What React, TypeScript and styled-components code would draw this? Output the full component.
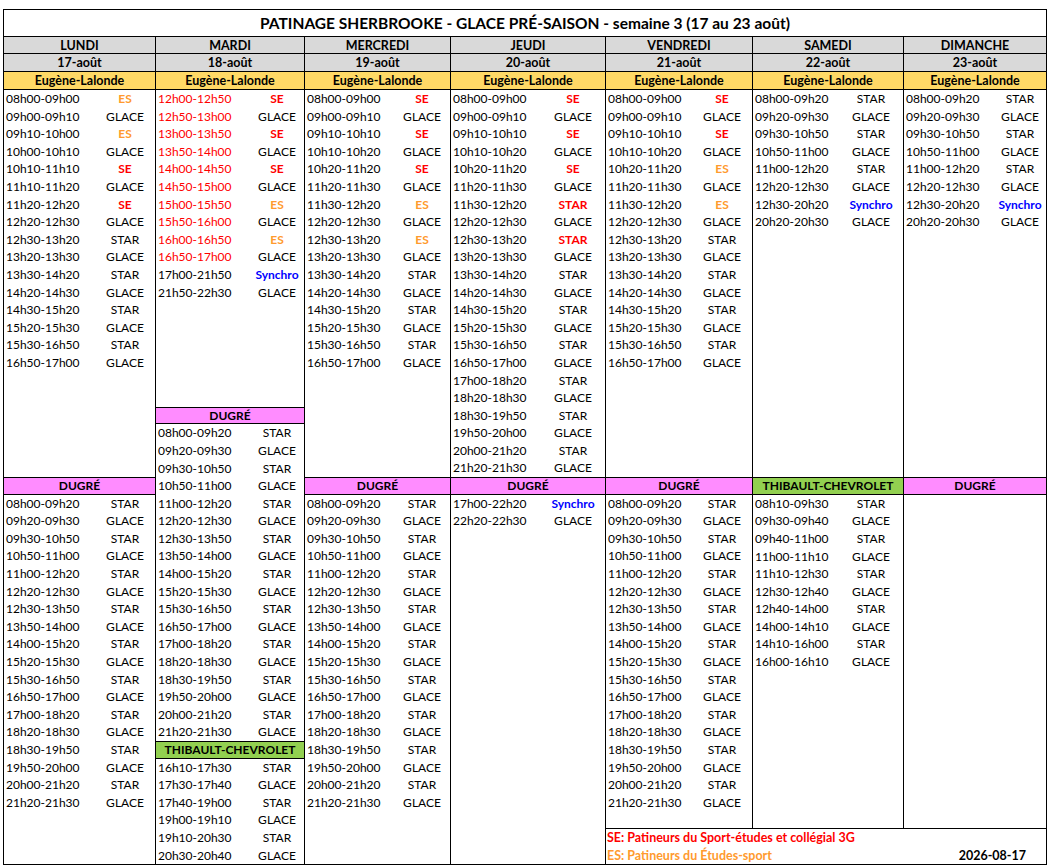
import styled, { createGlobalStyle } from 'styled-components';

type Tone = 'red' | 'orange' | 'blue' | 'ink';

type Slot =
  | { type: 'entry'; time: string; label: string; timeTone: Tone; labelTone: Tone }
  | { type: 'venue'; name: string; tone: 'pink' | 'green' }
  | { type: 'gap'; rows: number };

interface Day {
  name: string;
  date: string;
  typeW: number;
  toLegend: boolean; // la colonne descend jusqu'en bas (pas de légende dessous)
  slots: Slot[];
}

const ROW = 17.6;

const TONES: Record<Tone, string> = {
  red: '#ff0000',
  orange: '#ff9a2e',
  blue: '#0000ff',
  ink: '#000000',
};

const autoTone = (label: string): Tone => {
  if (label === 'SE') return 'red';
  if (label === 'ES') return 'orange';
  if (label === 'Synchro') return 'blue';
  return 'ink';
};

// une ligne horaire : [heure, type, couleur de l'heure?, couleur du type?]
type Raw = [string, string, Tone?, Tone?];

const list = (raw: Raw[]): Slot[] =>
  raw.map(([time, label, timeTone, labelTone]) => ({
    type: 'entry',
    time,
    label,
    timeTone: timeTone ?? 'ink',
    labelTone: labelTone ?? autoTone(label),
  }));

const venue = (name: string, tone: 'pink' | 'green'): Slot => ({ type: 'venue', name, tone });
const gap = (rows: number): Slot => ({ type: 'gap', rows });

const dugreSemaine: Raw[] = [
  ['08h00-09h20', 'STAR'],
  ['09h20-09h30', 'GLACE'],
  ['09h30-10h50', 'STAR'],
  ['10h50-11h00', 'GLACE'],
  ['11h00-12h20', 'STAR'],
  ['12h20-12h30', 'GLACE'],
  ['12h30-13h50', 'STAR'],
  ['13h50-14h00', 'GLACE'],
  ['14h00-15h20', 'STAR'],
  ['15h20-15h30', 'GLACE'],
  ['15h30-16h50', 'STAR'],
  ['16h50-17h00', 'GLACE'],
  ['17h00-18h20', 'STAR'],
  ['18h20-18h30', 'GLACE'],
  ['18h30-19h50', 'STAR'],
  ['19h50-20h00', 'GLACE'],
  ['20h00-21h20', 'STAR'],
  ['21h20-21h30', 'GLACE'],
];

// fin de journée commune à Eugène-Lalonde
const apresMidi: Raw[] = [
  ['13h30-14h20', 'STAR'],
  ['14h20-14h30', 'GLACE'],
  ['14h30-15h20', 'STAR'],
  ['15h20-15h30', 'GLACE'],
  ['15h30-16h50', 'STAR'],
  ['16h50-17h00', 'GLACE'],
];

const finDeSemaine: Raw[] = [
  ['08h00-09h20', 'STAR'],
  ['09h20-09h30', 'GLACE'],
  ['09h30-10h50', 'STAR'],
  ['10h50-11h00', 'GLACE'],
  ['11h00-12h20', 'STAR'],
  ['12h20-12h30', 'GLACE'],
  ['12h30-20h20', 'Synchro'],
  ['20h20-20h30', 'GLACE'],
];

const DAYS: Day[] = [
  {
    name: 'LUNDI',
    date: '17-août',
    typeW: 60,
    toLegend: true,
    slots: [
      ...list([
        ['08h00-09h00', 'ES'],
        ['09h00-09h10', 'GLACE'],
        ['09h10-10h00', 'ES'],
        ['10h00-10h10', 'GLACE'],
        ['10h10-11h10', 'SE'],
        ['11h10-11h20', 'GLACE'],
        ['11h20-12h20', 'SE'],
        ['12h20-12h30', 'GLACE'],
        ['12h30-13h20', 'STAR'],
        ['13h20-13h30', 'GLACE'],
        ...apresMidi,
      ]),
      gap(6),
      venue('DUGRÉ', 'pink'),
      ...list(dugreSemaine),
    ],
  },
  {
    name: 'MARDI',
    date: '18-août',
    typeW: 54,
    toLegend: true,
    slots: [
      ...list([
        ['12h00-12h50', 'SE', 'red'],
        ['12h50-13h00', 'GLACE', 'red'],
        ['13h00-13h50', 'SE', 'red'],
        ['13h50-14h00', 'GLACE', 'red'],
        ['14h00-14h50', 'SE', 'red'],
        ['14h50-15h00', 'GLACE', 'red'],
        ['15h00-15h50', 'ES', 'red'],
        ['15h50-16h00', 'GLACE', 'red'],
        ['16h00-16h50', 'ES', 'red'],
        ['16h50-17h00', 'GLACE', 'red'],
        ['17h00-21h50', 'Synchro'],
        ['21h50-22h30', 'GLACE'],
      ]),
      gap(6),
      venue('DUGRÉ', 'pink'),
      ...list(dugreSemaine),
      venue('THIBAULT-CHEVROLET', 'green'),
      ...list([
        ['16h10-17h30', 'STAR'],
        ['17h30-17h40', 'GLACE'],
        ['17h40-19h00', 'STAR'],
        ['19h00-19h10', 'GLACE'],
        ['19h10-20h30', 'STAR'],
        ['20h30-20h40', 'GLACE'],
      ]),
    ],
  },
  {
    name: 'MERCREDI',
    date: '19-août',
    typeW: 56,
    toLegend: true,
    slots: [
      ...list([
        ['08h00-09h00', 'SE'],
        ['09h00-09h10', 'GLACE'],
        ['09h10-10h10', 'SE'],
        ['10h10-10h20', 'GLACE'],
        ['10h20-11h20', 'SE'],
        ['11h20-11h30', 'GLACE'],
        ['11h30-12h20', 'ES'],
        ['12h20-12h30', 'GLACE'],
        ['12h30-13h20', 'ES'],
        ['13h20-13h30', 'GLACE'],
        ...apresMidi,
      ]),
      gap(6),
      venue('DUGRÉ', 'pink'),
      ...list(dugreSemaine),
    ],
  },
  {
    name: 'JEUDI',
    date: '20-août',
    typeW: 64,
    toLegend: true,
    slots: [
      ...list([
        ['08h00-09h00', 'SE'],
        ['09h00-09h10', 'GLACE'],
        ['09h10-10h10', 'SE'],
        ['10h10-10h20', 'GLACE'],
        ['10h20-11h20', 'SE'],
        ['11h20-11h30', 'GLACE'],
        ['11h30-12h20', 'STAR', undefined, 'red'],
        ['12h20-12h30', 'GLACE'],
        ['12h30-13h20', 'STAR', undefined, 'red'],
        ['13h20-13h30', 'GLACE'],
        ...apresMidi,
        ['17h00-18h20', 'STAR'],
        ['18h20-18h30', 'GLACE'],
        ['18h30-19h50', 'STAR'],
        ['19h50-20h00', 'GLACE'],
        ['20h00-21h20', 'STAR'],
        ['21h20-21h30', 'GLACE'],
      ]),
      venue('DUGRÉ', 'pink'),
      ...list([
        ['17h00-22h20', 'Synchro'],
        ['22h20-22h30', 'GLACE'],
      ]),
    ],
  },
  {
    name: 'VENDREDI',
    date: '21-août',
    typeW: 60,
    toLegend: false,
    slots: [
      ...list([
        ['08h00-09h00', 'SE'],
        ['09h00-09h10', 'GLACE'],
        ['09h10-10h10', 'SE'],
        ['10h10-10h20', 'GLACE'],
        ['10h20-11h20', 'ES'],
        ['11h20-11h30', 'GLACE'],
        ['11h30-12h20', 'ES'],
        ['12h20-12h30', 'GLACE'],
        ['12h30-13h20', 'STAR'],
        ['13h20-13h30', 'GLACE'],
        ...apresMidi,
      ]),
      gap(6),
      venue('DUGRÉ', 'pink'),
      ...list(dugreSemaine),
    ],
  },
  {
    name: 'SAMEDI',
    date: '22-août',
    typeW: 64,
    toLegend: false,
    slots: [
      ...list(finDeSemaine),
      gap(14),
      venue('THIBAULT-CHEVROLET', 'green'),
      ...list([
        ['08h10-09h30', 'STAR'],
        ['09h30-09h40', 'GLACE'],
        ['09h40-11h00', 'STAR'],
        ['11h00-11h10', 'GLACE'],
        ['11h10-12h30', 'STAR'],
        ['12h30-12h40', 'GLACE'],
        ['12h40-14h00', 'STAR'],
        ['14h00-14h10', 'GLACE'],
        ['14h10-16h00', 'STAR'],
        ['16h00-16h10', 'GLACE'],
      ]),
    ],
  },
  {
    name: 'DIMANCHE',
    date: '23-août',
    typeW: 52,
    toLegend: false,
    slots: [...list(finDeSemaine), gap(14), venue('DUGRÉ', 'pink')],
  },
];

const App = () => {
  return (
    <>
      <GlobalStyle />
      <St.Sheet>
        <St.Title>PATINAGE SHERBROOKE - GLACE PRÉ-SAISON - semaine 3 (17 au 23 août)</St.Title>

        {DAYS.map((d) => (
          <St.DayHead key={d.name}>{d.name}</St.DayHead>
        ))}
        {DAYS.map((d) => (
          <St.DateHead key={d.date}>{d.date}</St.DateHead>
        ))}
        {DAYS.map((d) => (
          <St.RinkHead key={d.name}>Eugène-Lalonde</St.RinkHead>
        ))}

        {DAYS.map((d) => (
          <St.DayBody key={d.name} $full={d.toLegend}>
            {d.slots.map((s, i) => {
              if (s.type === 'gap') return <St.Gap key={i} $rows={s.rows} />;
              if (s.type === 'venue')
                return (
                  <St.SubVenue key={i} $tone={s.tone}>
                    {s.name}
                  </St.SubVenue>
                );
              return (
                <St.Entry key={i} $typeW={d.typeW}>
                  <St.Time $tone={s.timeTone}>{s.time}</St.Time>
                  <St.Label $tone={s.labelTone}>{s.label}</St.Label>
                </St.Entry>
              );
            })}
          </St.DayBody>
        ))}

        <St.Legend>
          <St.LegendLine $tone="red">SE: Patineurs du Sport-études et collégial 3G</St.LegendLine>
          <St.LegendLine $tone="orange">
            ES: Patineurs du Études-sport
            <St.Stamp>2026-08-17</St.Stamp>
          </St.LegendLine>
        </St.Legend>
      </St.Sheet>
    </>
  );
};

export default App;

const GlobalStyle = createGlobalStyle`
  body {
    margin: 0;
    background: #ffffff;
    font-family: Lato, "Liberation Sans", sans-serif;
    color: #000000;
  }
`;

const St = {
  Sheet: styled.div`
    display: grid;
    grid-template-columns: 151px 148px 145px 154px 146px 150px 142px;
    grid-template-rows: 26px 16px 17px 17px 738px 35px;
    gap: 1px;
    width: max-content;
    margin: 9px 0 0 3px;
    border: 1px solid #000000;
    background: #000000;
    font-size: 12.5px;
  `,

  Title: styled.div`
    grid-column: 1 / -1;
    display: flex;
    align-items: center;
    justify-content: center;
    background: #ffffff;
    font-size: 15.5px;
    font-weight: 700;
  `,

  DayHead: styled.div`
    display: flex;
    align-items: center;
    justify-content: center;
    background: #d9d9d9;
    font-weight: 700;
  `,

  DateHead: styled.div`
    display: flex;
    align-items: center;
    justify-content: center;
    background: #d9d9d9;
    font-weight: 700;
  `,

  RinkHead: styled.div`
    display: flex;
    align-items: center;
    justify-content: center;
    background: #ffd966;
    font-weight: 700;
  `,

  DayBody: styled.div<{ $full: boolean }>`
    grid-row: ${({ $full }) => ($full ? '5 / span 2' : '5')};
    display: flex;
    flex-direction: column;
    overflow: hidden;
    background: #ffffff;
  `,

  Gap: styled.div<{ $rows: number }>`
    flex: none;
    height: ${({ $rows }) => $rows * ROW}px;
  `,

  SubVenue: styled.div<{ $tone: 'pink' | 'green' }>`
    flex: none;
    box-sizing: border-box;
    height: ${ROW}px;
    display: flex;
    align-items: center;
    justify-content: center;
    border-top: 1px solid #000000;
    border-bottom: 1px solid #000000;
    background: ${({ $tone }) => ($tone === 'pink' ? '#ff8cff' : '#92d050')};
    font-size: 12px;
    font-weight: 700;
  `,

  Entry: styled.div<{ $typeW: number }>`
    flex: none;
    height: ${ROW}px;
    display: grid;
    grid-template-columns: 1fr ${({ $typeW }) => $typeW}px;
    align-items: center;
    padding-left: 2px;
    font-size: 12px;
    line-height: ${ROW}px;
    white-space: nowrap;
  `,

  Time: styled.span<{ $tone: Tone }>`
    color: ${({ $tone }) => TONES[$tone]};
  `,

  Label: styled.span<{ $tone: Tone }>`
    text-align: center;
    color: ${({ $tone }) => TONES[$tone]};
    font-weight: ${({ $tone }) => ($tone === 'ink' ? 400 : 700)};
  `,

  Legend: styled.div`
    grid-row: 6;
    grid-column: 5 / span 3;
    display: flex;
    flex-direction: column;
    justify-content: center;
    padding-left: 1px;
    background: #ffffff;
    font-weight: 700;
  `,

  LegendLine: styled.div<{ $tone: Tone }>`
    display: flex;
    justify-content: space-between;
    height: 17.5px;
    line-height: 17.5px;
    padding-right: 20px;
    color: ${({ $tone }) => TONES[$tone]};
  `,

  Stamp: styled.span`
    color: #000000;
  `,
};
